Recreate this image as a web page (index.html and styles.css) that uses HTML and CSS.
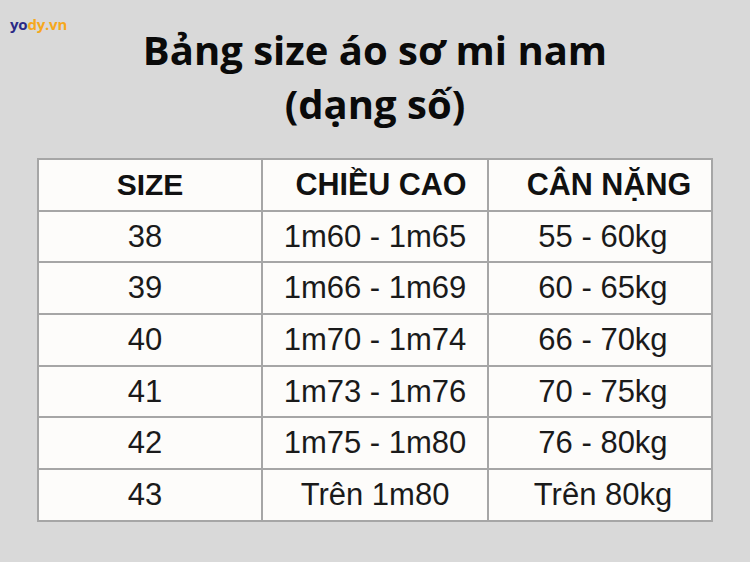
FILE: index.html
```html
<!DOCTYPE html>
<html lang="vi">
<head>
<meta charset="utf-8">
<title>Bảng size áo sơ mi nam</title>
<link rel="stylesheet" href="styles.css">
</head>
<body>
<div class="page">
  <div class="logo"><span class="yo">yo</span><span class="dy">dy.vn</span></div>
  <h1 class="title">Bảng size áo sơ mi nam<br>(dạng số)</h1>
  <table class="size-table">
    <colgroup>
      <col class="col-a"><col class="col-b"><col class="col-c">
    </colgroup>
    <thead>
      <tr><th class="c1">SIZE</th><th class="c2">CHIỀU CAO</th><th class="c3">CÂN NẶNG</th></tr>
    </thead>
    <tbody>
      <tr><td class="c1">38</td><td class="c2">1m60 - 1m65</td><td class="c3">55 - 60kg</td></tr>
      <tr><td class="c1">39</td><td class="c2">1m66 - 1m69</td><td class="c3">60 - 65kg</td></tr>
      <tr><td class="c1">40</td><td class="c2">1m70 - 1m74</td><td class="c3">66 - 70kg</td></tr>
      <tr><td class="c1">41</td><td class="c2">1m73 - 1m76</td><td class="c3">70 - 75kg</td></tr>
      <tr><td class="c1">42</td><td class="c2">1m75 - 1m80</td><td class="c3">76 - 80kg</td></tr>
      <tr><td class="c1">43</td><td class="c2">Trên 1m80</td><td class="c3">Trên 80kg</td></tr>
    </tbody>
  </table>
</div>
</body>
</html>
```
FILE: styles.css
```css
html, body {
  margin: 0;
  padding: 0;
  background: #d9d9d9;
}
.page {
  position: relative;
  width: 750px;
  height: 562px;
  background: #d9d9d9;
  padding-top: 23px;
  box-sizing: border-box;
}
.logo {
  position: absolute;
  left: 10px;
  top: 14px;
  font-family: "Open Sans", sans-serif;
  font-weight: 700;
  font-size: 15px;
  letter-spacing: -0.2px;
  line-height: 20px;
}
.logo .yo { color: #2b2a86; }
.logo .dy { color: #f6a81c; }
.title {
  margin: 0;
  text-align: center;
  font-family: "Open Sans", sans-serif;
  font-weight: 700;
  font-size: 40px;
  line-height: 54px;
  color: #0a0a0a;
}
.size-table {
  margin: 27px 0 0 37px;
  width: 674px;
  border-collapse: collapse;
  background: #fdfcfa;
  font-family: "Liberation Sans", Arial, sans-serif;
  color: #1a1a1a;
  table-layout: fixed;
}
.col-a { width: 224px; }
.col-b { width: 226px; }
.col-c { width: 224px; }
.size-table th, .size-table td {
  border: 2px solid #a6a6a6;
  height: 49.7px;
  padding: 0;
  text-align: center;
  vertical-align: middle;
  white-space: nowrap;
}
.size-table th {
  font-weight: 700;
  font-size: 30.5px;
  color: #111;
}
.size-table th.c1 { font-size: 30px; }
.size-table td {
  font-size: 31px;
  font-weight: 400;
}
.size-table th.c2 { padding-left: 12px; }
.size-table th.c3 { padding-left: 18px; }
.size-table td.c1 { padding-right: 10px; }
.size-table td.c3 { padding-left: 6px; }
```
